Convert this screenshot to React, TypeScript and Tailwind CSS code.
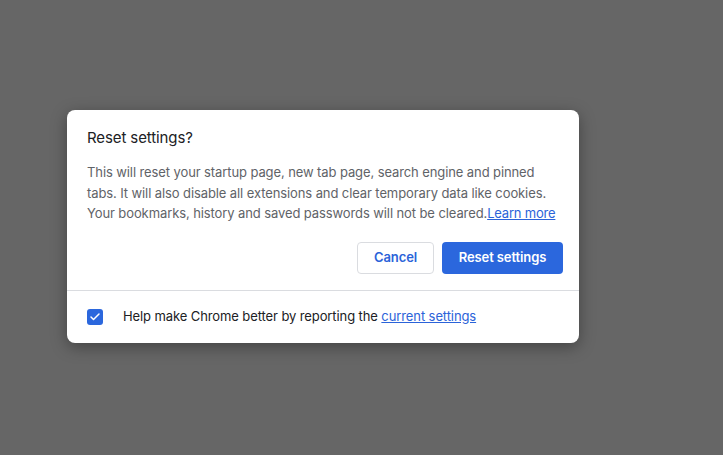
import { Check } from 'lucide-react'

export default function App() {
  return (
    <div
      className="flex h-[455px] w-[723px] items-start justify-start bg-[#666666] pl-[67px] pt-[110px]"
      style={{ fontFamily: 'Inter, "Noto Sans", Roboto, sans-serif' }}
    >
      <div className="w-[512px] overflow-hidden rounded-[8px] bg-white tracking-[-0.1px] shadow-[0_4px_16px_rgba(0,0,0,0.35)]">
        <div className="px-5 pb-4 pt-[18px]">
          <h1 className="text-[15px] leading-[20px] text-[#202124]">Reset settings?</h1>
          <p className="mt-[14px] text-[13px] leading-[20.5px] text-[#5f6368]">
            This will reset your startup page, new tab page, search engine and pinned tabs. It will also disable all
            extensions and clear temporary data like cookies. Your bookmarks, history and saved passwords will not be
            cleared.
            <a href="#" className="whitespace-nowrap tracking-[-0.2px] text-[#2b63d9] underline">
              Learn more
            </a>
          </p>
          <div className="mt-[18px] -mr-1 flex justify-end gap-2">
            <button className="h-[32px] w-[77px] rounded-[4px] border border-[#dadce0] bg-white text-[13px] font-semibold text-[#2b63d9]">
              Cancel
            </button>
            <button className="h-[32px] w-[121px] rounded-[4px] bg-[#2b67dd] text-[13px] font-semibold text-white">
              Reset settings
            </button>
          </div>
        </div>
        <div className="h-px bg-[#dadce0]" />
        <div className="flex h-[52px] items-center pl-5">
          <span className="flex h-4 w-4 items-center justify-center rounded-[3px] bg-[#2b67dd]">
            <Check className="h-3 w-3 text-white" strokeWidth={3} />
          </span>
          <span className="ml-[20px] text-[13px] text-[#202124]">
            Help make Chrome better by reporting the{' '}
            <a href="#" className="text-[#2b63d9] underline">
              current settings
            </a>
          </span>
        </div>
      </div>
    </div>
  )
}
